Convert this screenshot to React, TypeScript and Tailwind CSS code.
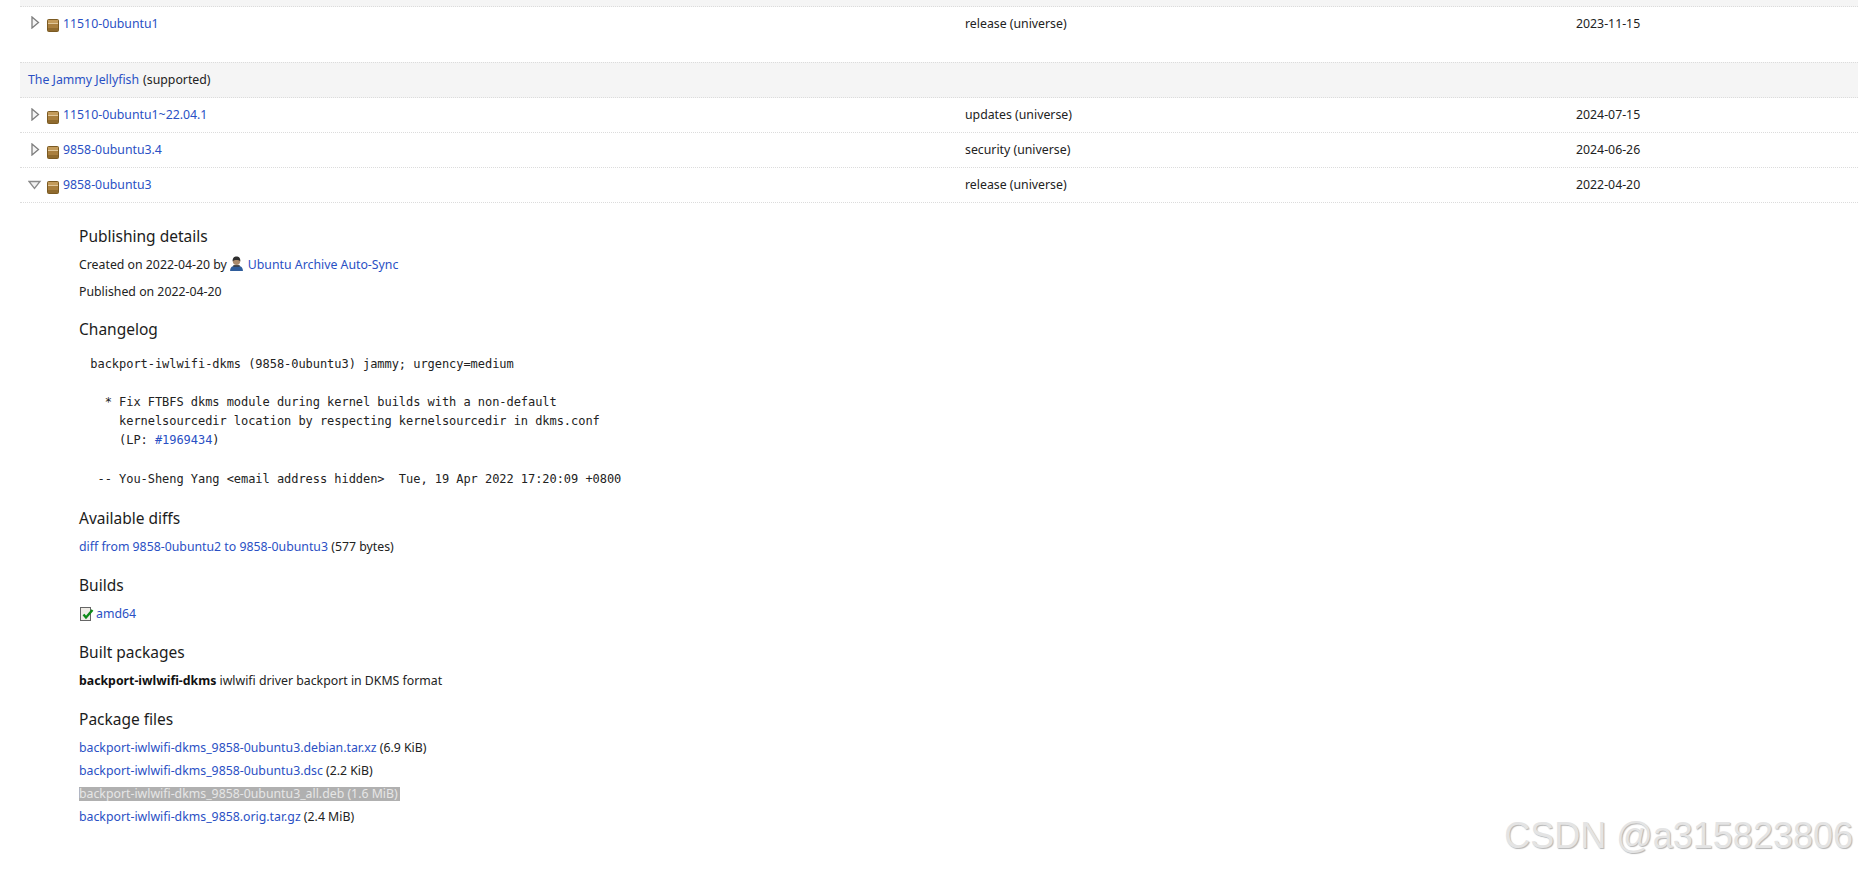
import React from 'react';

const link = 'text-[#2a50c4]';

function Expander({ open }: { open?: boolean }) {
  if (open) {
    return (
      <svg width="14" height="10" viewBox="0 0 14 10" className="shrink-0 -ml-[2px] mr-[5px]">
        <path d="M1 1.500h11L6.500 8.500z" fill="#f1f1f1" stroke="#8a8a8a" strokeWidth="1.300" />
      </svg>
    );
  }
  return (
    <svg width="9" height="13" viewBox="0 0 9 13" className="shrink-0 ml-px mr-[7px] -mt-[2px]">
      <path d="M1 1l6.500 5.500L1 12z" fill="#f4f4f4" stroke="#7d7d7d" strokeWidth="1.300" />
    </svg>
  );
}

function PackageIcon() {
  return (
    <svg width="12" height="13" viewBox="0 0 12 13" className="shrink-0 mt-[4px]">
      <rect x="0.500" y="0.500" width="11" height="12" rx="1" fill="#a97f3e" stroke="#7b5a22" />
      <rect x="1" y="1" width="10" height="3" fill="#c39b5b" />
      <path d="M1 4.500h10" stroke="#e0c79a" strokeWidth="1" />
      <path d="M1 9h10v3H1z" fill="#8f6a2e" />
    </svg>
  );
}

function PersonIcon() {
  return (
    <svg width="15" height="15" viewBox="0 0 14 14" className="inline-block align-[-2px] mx-[2px]">
      <path d="M1 14c0-4 2.400-5 6-5s6 1 6 5z" fill="#2f5d9b" />
      <circle cx="7" cy="5" r="3.400" fill="#a98a6b" />
      <path d="M3.400 5C3.200 1.800 5 .5 7 .5s3.800 1.300 3.600 4.500C9 3.400 5 3.400 3.400 5z" fill="#2e2e2e" />
      <path d="M4 8.500h6v1.500H4z" fill="#3c3c3c" />
    </svg>
  );
}

function BuildIcon() {
  return (
    <svg width="14" height="15" viewBox="0 0 14 15" className="shrink-0 ml-px mr-[2px]">
      <rect x="0.500" y="1.500" width="10" height="13" fill="#efece6" stroke="#666" />
      <path d="M3.500 8.500l2.500 3L12.500 4" fill="none" stroke="#0d8a17" strokeWidth="2.400" />
    </svg>
  );
}

function VersionRow({ version, pocket, date, open }: { version: string; pocket: string; date: string; open?: boolean }) {
  return (
    <div className="flex items-center h-[35px] border-b border-dotted border-[#dcdcdc] pl-[10px]">
      <div className="flex items-center w-[935px]">
        <Expander open={open} />
        <PackageIcon />
        <a className={`${link} ml-[4px]`}>{version}</a>
      </div>
      <div className="w-[611px]">{pocket}</div>
      <div>{date}</div>
    </div>
  );
}

function Heading({ children }: { children: React.ReactNode }) {
  return <h2 className="text-[15.5px] leading-5 text-[#1c1c1c] mb-[10px]">{children}</h2>;
}

export default function App() {
  return (
    <div className="relative h-screen overflow-hidden bg-white text-[#222] text-[12.3px] leading-[18px] font-['Noto_Sans','Open_Sans',sans-serif]">
      <div className="ml-5">
        <div className="h-[7px] bg-[#f5f5f5] border-b border-dotted border-[#dcdcdc]" />
        <div className="flex items-center h-[34px] pl-[10px] pb-px">
          <div className="flex items-center w-[935px]">
            <Expander />
            <PackageIcon />
            <a className={`${link} ml-[4px]`}>11510-0ubuntu1</a>
          </div>
          <div className="w-[611px]">release (universe)</div>
          <div>2023-11-15</div>
        </div>

        <div className="mt-[21px] h-[36px] flex items-center pl-2 pb-px bg-[#f5f5f5] border-y border-dotted border-[#dcdcdc]">
          <a className={link}>The Jammy Jellyfish</a>
          <span className="ml-1">(supported)</span>
        </div>

        <VersionRow version="11510-0ubuntu1~22.04.1" pocket="updates (universe)" date="2024-07-15" />
        <VersionRow version="9858-0ubuntu3.4" pocket="security (universe)" date="2024-06-26" />
        <VersionRow version="9858-0ubuntu3" pocket="release (universe)" date="2022-04-20" open />

        <div className="pl-[59px] pt-[23px]">
          <Heading>Publishing details</Heading>
          <p>
            Created on 2022-04-20 by
            <PersonIcon />
            <a className={`${link} ml-[2px]`}>Ubuntu Archive Auto-Sync</a>
          </p>
          <p className="mt-[9px]">Published on 2022-04-20</p>

          <div className="mt-[18px]">
            <Heading>Changelog</Heading>
          </div>
          <pre className="mt-[16px] -ml-[3px] text-[12px] leading-[19.100px] tracking-[-0.05px] text-[#222] font-['DejaVu_Sans_Mono',monospace]">
{`  backport-iwlwifi-dkms (9858-0ubuntu3) jammy; urgency=medium

    * Fix FTBFS dkms module during kernel builds with a non-default
      kernelsourcedir location by respecting kernelsourcedir in dkms.conf
      (LP: `}<a className={link}>#1969434</a>{`)

   -- You-Sheng Yang <email address hidden>  Tue, 19 Apr 2022 17:20:09 +0800`}
          </pre>

          <div className="mt-[19px]">
            <Heading>Available diffs</Heading>
          </div>
          <p>
            <a className={link}>diff from 9858-0ubuntu2 to 9858-0ubuntu3</a> (577 bytes)
          </p>

          <div className="mt-[19px]">
            <Heading>Builds</Heading>
          </div>
          <p className="flex items-center">
            <BuildIcon />
            <a className={link}>amd64</a>
          </p>

          <div className="mt-[19px]">
            <Heading>Built packages</Heading>
          </div>
          <p>
            <b className="font-bold text-[#111]">backport-iwlwifi-dkms</b> iwlwifi driver backport in DKMS format
          </p>

          <div className="mt-[19px]">
            <Heading>Package files</Heading>
          </div>
          <div className="flex flex-col gap-[5px] items-start">
            <p><a className={link}>backport-iwlwifi-dkms_9858-0ubuntu3.debian.tar.xz</a> (6.9 KiB)</p>
            <p><a className={link}>backport-iwlwifi-dkms_9858-0ubuntu3.dsc</a> (2.2 KiB)</p>
            <p className="bg-[#b0b0b0] text-[#e6e6e6] h-[14px] leading-[14px] my-[2px] pr-[2px]">backport-iwlwifi-dkms_9858-0ubuntu3_all.deb (1.6 MiB)</p>
            <p><a className={link}>backport-iwlwifi-dkms_9858.orig.tar.gz</a> (2.4 MiB)</p>
          </div>
        </div>
      </div>

      <div className="absolute right-[5px] top-[815px] text-[36px] leading-[42px] text-[#e4e4e4] [text-shadow:1px_1px_1px_#b5b5b5] font-['Liberation_Sans',sans-serif]">
        CSDN @a315823806
      </div>
    </div>
  );
}
